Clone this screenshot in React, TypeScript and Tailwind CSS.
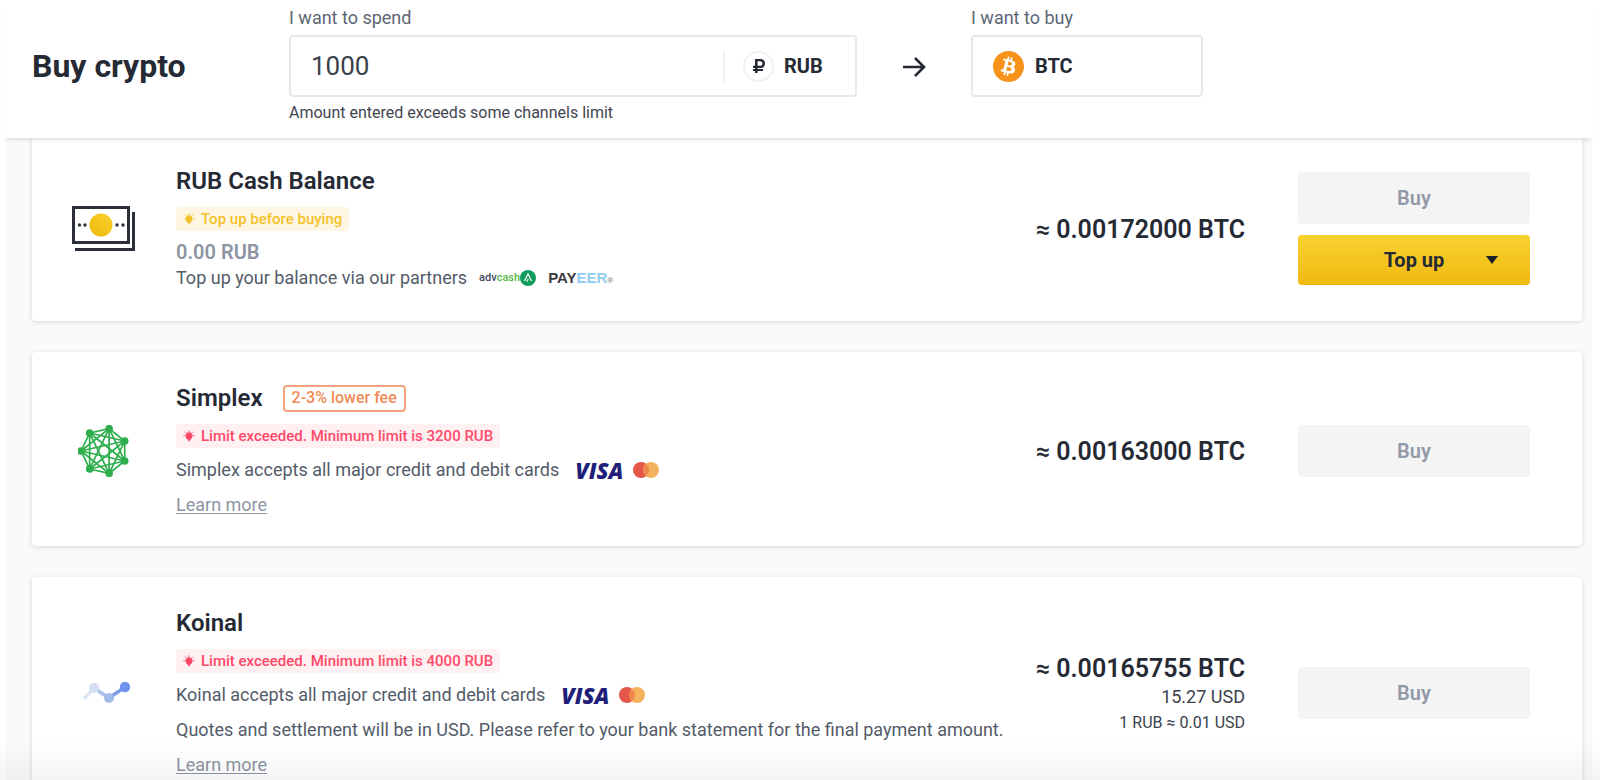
import type { ReactNode } from "react";
import { FaRubleSign } from "react-icons/fa";
import { SiBitcoin } from "react-icons/si";

const CashIcon = () => (
  <svg viewBox="0 0 64 46" className="h-[46px] w-16" fill="none">
    <path d="M61.5 6v37.5H3" stroke="#2b2f3a" strokeWidth="3" />
    <rect x="1.5" y="1.5" width="55" height="35" stroke="#2b2f3a" strokeWidth="3" />
    <circle cx="29" cy="19" r="11.5" fill="url(#coin)" />
    <g fill="#2b2f3a">
      <circle cx="7.5" cy="19" r="1.7" />
      <circle cx="13" cy="19" r="1.7" />
      <circle cx="45" cy="19" r="1.7" />
      <circle cx="51" cy="19" r="1.7" />
    </g>
    <defs>
      <linearGradient id="coin" x1="1" y1="0" x2="0" y2="1">
        <stop stopColor="#f8d12f" />
        <stop offset="1" stopColor="#f0b90b" />
      </linearGradient>
    </defs>
  </svg>
);

// Seven nodes on a ring, each one joined to every other
const nodes = Array.from({ length: 7 }, (_, i) => {
  const angle = Math.PI + (i * 2 * Math.PI) / 7;
  return { x: 26 + 23 * Math.cos(angle), y: 26 + 23 * Math.sin(angle) };
});

const SimplexIcon = () => (
  <svg viewBox="0 0 52 52" className="h-[52px] w-[52px]">
    <g stroke="#2fae4d" strokeWidth="1.7">
      {nodes.flatMap((a, i) =>
        nodes.slice(i + 1).map((b, j) => (
          <line key={`${i}-${j}`} x1={a.x} y1={a.y} x2={b.x} y2={b.y} />
        ))
      )}
    </g>
    {nodes.map((n, i) => (
      <circle key={i} cx={n.x} cy={n.y} r="3.8" fill="#2fae4d" />
    ))}
  </svg>
);

const KoinalIcon = () => (
  <svg viewBox="-4 0 48 24" className="h-6 w-12 overflow-visible" fill="none">
    <path d="M0 18L10 7" stroke="#dbe5f3" strokeWidth="3.5" />
    <path d="M10 7L25 17" stroke="#a9c0ea" strokeWidth="3.5" />
    <path d="M25 17L41 6" stroke="#7e9ce8" strokeWidth="3.5" />
    <circle cx="10" cy="7" r="5" fill="#d3dff1" />
    <circle cx="25" cy="17" r="5" fill="#a3bbe9" />
    <circle cx="41" cy="6" r="5.2" fill="#6f92ef" />
  </svg>
);

const BulbIcon = () => (
  <svg viewBox="0 0 12 12" className="h-3 w-3" fill="currentColor">
    <circle cx="6" cy="5.8" r="3.5" />
    <path d="M3 7.2h6L6 11.8z" />
    <path
      d="M6 .3v1.8M.3 5.8h1.6M10.1 5.8h1.6M1.9 1.7l1.2 1.2M10.1 1.7L8.9 2.9"
      stroke="currentColor"
      strokeWidth="0.9"
    />
  </svg>
);

const CardBrands = () => (
  <span className="ml-4 flex items-center gap-2.5">
    <span className="font-['Open_Sans',sans-serif] text-[22px] leading-6 font-extrabold text-[#1f1f7a] italic">
      VISA
    </span>
    <svg viewBox="0 0 26 16" className="h-4 w-[26px]">
      <circle cx="8" cy="8" r="8" fill="#e4564a" />
      <circle cx="18" cy="8" r="8" fill="#f5b25c" />
      <path d="M13 1.75a8 8 0 0 1 0 12.5a8 8 0 0 1 0-12.5z" fill="#ee8650" />
    </svg>
  </span>
);

const Notice = ({ tone, children }: { tone: "warning" | "error"; children: ReactNode }) => (
  <p
    className={
      tone === "warning"
        ? "flex h-6 w-fit items-center gap-1.5 rounded-sm bg-[#fef6e2] px-[7px] text-[15px] font-medium text-[#f3c22c]"
        : "flex h-6 w-fit items-center gap-1.5 rounded-sm bg-[#fff0f1] px-[7px] text-[15px] font-medium text-[#fd4a6a]"
    }
  >
    <BulbIcon />
    {children}
  </p>
);

const BuyButton = () => (
  <button
    type="button"
    disabled
    className="h-[52px] w-full rounded bg-[#f4f4f4] text-[20px] font-semibold text-[#929aa8]"
  >
    Buy
  </button>
);

const LearnMore = () => (
  <a href="#" className="w-fit leading-6 text-[#8d95a3] underline underline-offset-2">
    Learn more
  </a>
);

type ChannelProps = {
  icon: ReactNode;
  price: string;
  extra?: ReactNode;
  actions: ReactNode;
  className: string;
  children: ReactNode;
};

const Channel = ({ icon, price, extra, actions, className, children }: ChannelProps) => (
  <section
    className={`flex items-center bg-white pr-[52px] shadow-[0_1px_5px_rgba(0,0,0,0.14)] ${className}`}
  >
    <div className="flex w-36 shrink-0 justify-center">{icon}</div>
    <div className="flex min-w-0 flex-1 flex-col text-[18px] whitespace-nowrap text-[#535b69]">
      {children}
    </div>
    <div className="flex shrink-0 flex-col items-end text-[#3b414d]">
      <p className="pt-0.5 text-[25px] leading-8 font-semibold text-[#252a34]">≈ {price} BTC</p>
      {extra}
    </div>
    <div className="ml-[53px] flex w-[232px] shrink-0 flex-col gap-[11px]">{actions}</div>
  </section>
);

const titleClass = "text-[24px] leading-7 font-semibold text-[#252a34]";

const App = () => {
  return (
    <div className="flex h-screen flex-col overflow-hidden bg-white pr-2 pl-[5px] font-[Roboto,sans-serif]">
      {/* Amount form */}
      <header className="relative z-10 flex bg-white pt-2 pb-4 pl-[27px] shadow-[0_4px_4px_-2px_rgba(0,0,0,0.12)]">
        <h1 className="mt-10 w-[257px] text-[32px] leading-9 font-bold text-[#252a34]">Buy crypto</h1>

        <div className="w-[568px]">
          <label htmlFor="spend" className="block text-[18px] leading-5 text-[#5d6675]">
            I want to spend
          </label>
          <div className="mt-[7px] flex h-[62px] items-center rounded border-2 border-[#e8e8e8]">
            <input
              id="spend"
              defaultValue="1000"
              className="min-w-0 flex-1 pl-5 text-[26px] text-[#3a3f4a] outline-none"
            />
            <div className="flex h-8 items-center border-l-2 border-[#f3f3f3] pl-[18px]">
              <span className="flex h-[31px] w-[31px] items-center justify-center rounded-full border-2 border-[#f1f1f1]">
                <FaRubleSign className="h-4 w-3.5 text-[#252a34]" />
              </span>
              <select
                aria-label="Currency to spend"
                className="ml-2.5 w-[71px] appearance-none bg-transparent text-[20px] font-bold text-[#252a34]"
              >
                <option>RUB</option>
              </select>
            </div>
          </div>
          <p className="mt-[7px] text-[16px] leading-[18px] text-[#3f4551]">
            Amount entered exceeds some channels limit
          </p>
        </div>

        <svg viewBox="0 0 24 20" className="mx-[45px] mt-[49px] h-5 w-6" fill="none">
          <path d="M1 10h21M13 1l9 9-9 9" stroke="#252a34" strokeWidth="2.6" />
        </svg>

        <div className="w-[232px]">
          <label htmlFor="buy" className="block text-[18px] leading-5 text-[#5d6675]">
            I want to buy
          </label>
          <div className="mt-[7px] flex h-[62px] items-center rounded border-2 border-[#e8e8e8] pl-5">
            <SiBitcoin className="h-[31px] w-[31px] text-[#f7931a]" />
            <select
              id="buy"
              className="ml-[11px] flex-1 appearance-none bg-transparent text-[20px] font-bold text-[#252a34]"
            >
              <option>BTC</option>
            </select>
          </div>
        </div>
      </header>

      {/* Payment channels */}
      <main className="flex-1 overflow-hidden bg-[#fafafa] pr-[10px] pl-[27px]">
        <Channel
          className="rounded-b pt-[29px] pb-[31px]"
          icon={<CashIcon />}
          price="0.00172000"
          actions={
            <>
              <BuyButton />
              <button
                type="button"
                className="flex h-[50px] items-center rounded-sm bg-linear-to-b from-[#f8d12f] to-[#f0b90b] text-[20px] font-bold text-[#252a34]"
              >
                <span className="w-12" />
                <span className="flex-1 text-center">Top up</span>
                <svg viewBox="0 0 12 8" className="mr-8 ml-1 h-2 w-3">
                  <path d="M0 0h12L6 8z" fill="#1c1f26" />
                </svg>
              </button>
            </>
          }
        >
          <h2 className={titleClass}>RUB Cash Balance</h2>
          <div className="mt-3 mb-[9px]">
            <Notice tone="warning">Top up before buying</Notice>
          </div>
          <p className="text-[20px] leading-6 font-semibold text-[#8d95a3]">0.00 RUB</p>
          <div className="mt-0.5 flex h-6 items-center leading-6">
            Top up your balance via our partners
            <span className="ml-3 flex items-center text-[11px] font-medium text-[#3d4560]">
              adv<span className="text-[#55b948]">cash</span>
              <svg viewBox="0 0 16 16" className="h-4 w-4" fill="none">
                <circle cx="8" cy="8" r="8" fill="#109c5c" />
                <path d="M4.5 11L8 4l3.5 7M7 11.5l1.2-2.5" stroke="#fff" strokeWidth="1.3" />
              </svg>
            </span>
            <span className="ml-3 font-['Liberation_Sans',sans-serif] text-[15px] font-bold text-[#3a3a3e]">
              PAY<span className="text-[#93cbf3]">EER</span>
              <span className="text-[8px] leading-none text-[#8a8a8a]">®</span>
            </span>
          </div>
        </Channel>

        <Channel
          className="mt-[31px] rounded pt-8 pb-[29px]"
          icon={<SimplexIcon />}
          price="0.00163000"
          actions={<BuyButton />}
        >
          <div className="flex items-center gap-5">
            <h2 className={titleClass}>Simplex</h2>
            <span className="-my-1 flex h-[27px] items-center rounded-sm border-2 border-[#f2a37c] px-[7px] text-[16px] font-medium text-[#f08a55]">
              2-3% lower fee
            </span>
          </div>
          <div className="mt-3 mb-2.5">
            <Notice tone="error">Limit exceeded. Minimum limit is 3200 RUB</Notice>
          </div>
          <div className="mb-[11px] flex items-center leading-6">
            Simplex accepts all major credit and debit cards
            <CardBrands />
          </div>
          <LearnMore />
        </Channel>

        <Channel
          className="mt-[31px] rounded pt-8 pb-[29px]"
          icon={<KoinalIcon />}
          price="0.00165755"
          extra={
            <>
              <p className="text-[18px] leading-6">15.27 USD</p>
              <p className="mt-0.5 text-[16px] leading-6">1 RUB ≈ 0.01 USD</p>
            </>
          }
          actions={<BuyButton />}
        >
          <h2 className={titleClass}>Koinal</h2>
          <div className="mt-3 mb-2.5">
            <Notice tone="error">Limit exceeded. Minimum limit is 4000 RUB</Notice>
          </div>
          <div className="mb-[11px] flex items-center leading-6">
            Koinal accepts all major credit and debit cards
            <CardBrands />
          </div>
          <p className="mb-[11px] leading-6">
            Quotes and settlement will be in USD. Please refer to your bank statement for the final payment amount.
          </p>
          <LearnMore />
        </Channel>
      </main>

      {/* Fade over the cut-off list */}
      <div className="pointer-events-none fixed inset-x-0 bottom-0 h-10 bg-linear-to-b from-transparent to-black/4" />
    </div>
  );
};

export default App;
